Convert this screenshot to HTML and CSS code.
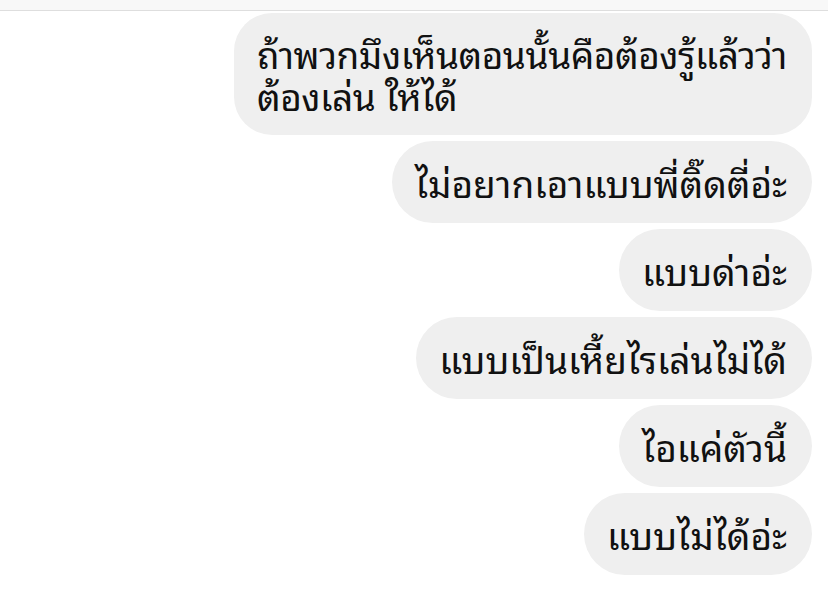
FILE: index.html
```html
<!DOCTYPE html>
<html lang="th">
<head>
<meta charset="utf-8">
<link rel="stylesheet" href="styles.css">
</head>
<body>
<div class="topbar"></div>
<div class="thread">
  <div class="bubble wide">ถ้าพวกมึงเห็นตอนนั้นคือต้องรู้แล้วว่า<br>ต้องเล่น ให้ได้</div>
  <div class="bubble">ไม่อยากเอาแบบพี่ติ๊ดตี่อ่ะ</div>
  <div class="bubble">แบบด่าอ่ะ</div>
  <div class="bubble">แบบเป็นเหี้ยไรเล่นไม่ได้</div>
  <div class="bubble">ไอแค่ตัวนี้</div>
  <div class="bubble">แบบไม่ได้อ่ะ</div>
</div>
</body>
</html>
```
FILE: styles.css
```css
html, body {
  margin: 0;
  padding: 0;
  background: #ffffff;
}
body {
  width: 828px;
  height: 599px;
  overflow: hidden;
  font-family: "Noto Sans Thai Looped", "Noto Sans Thai", "Noto Sans", sans-serif;
  color: #111111;
}
.topbar {
  height: 10px;
  background: #f8f8f8;
  border-bottom: 1px solid #dedede;
}
.thread {
  display: flex;
  flex-direction: column;
  align-items: flex-end;
  gap: 6px;
  padding: 2px 16px 0 0;
}
.bubble {
  background: #efefef;
  border-radius: 41px;
  padding: 21px 25px 21px 23px;
  font-size: 37px;
  line-height: 40px;
  white-space: nowrap;
}
.bubble.wide {
  min-width: 530px;
  border-radius: 38px;
  letter-spacing: -0.45px;
  line-height: 42px;
  padding-top: 19px;
  padding-bottom: 19px;
}
```
